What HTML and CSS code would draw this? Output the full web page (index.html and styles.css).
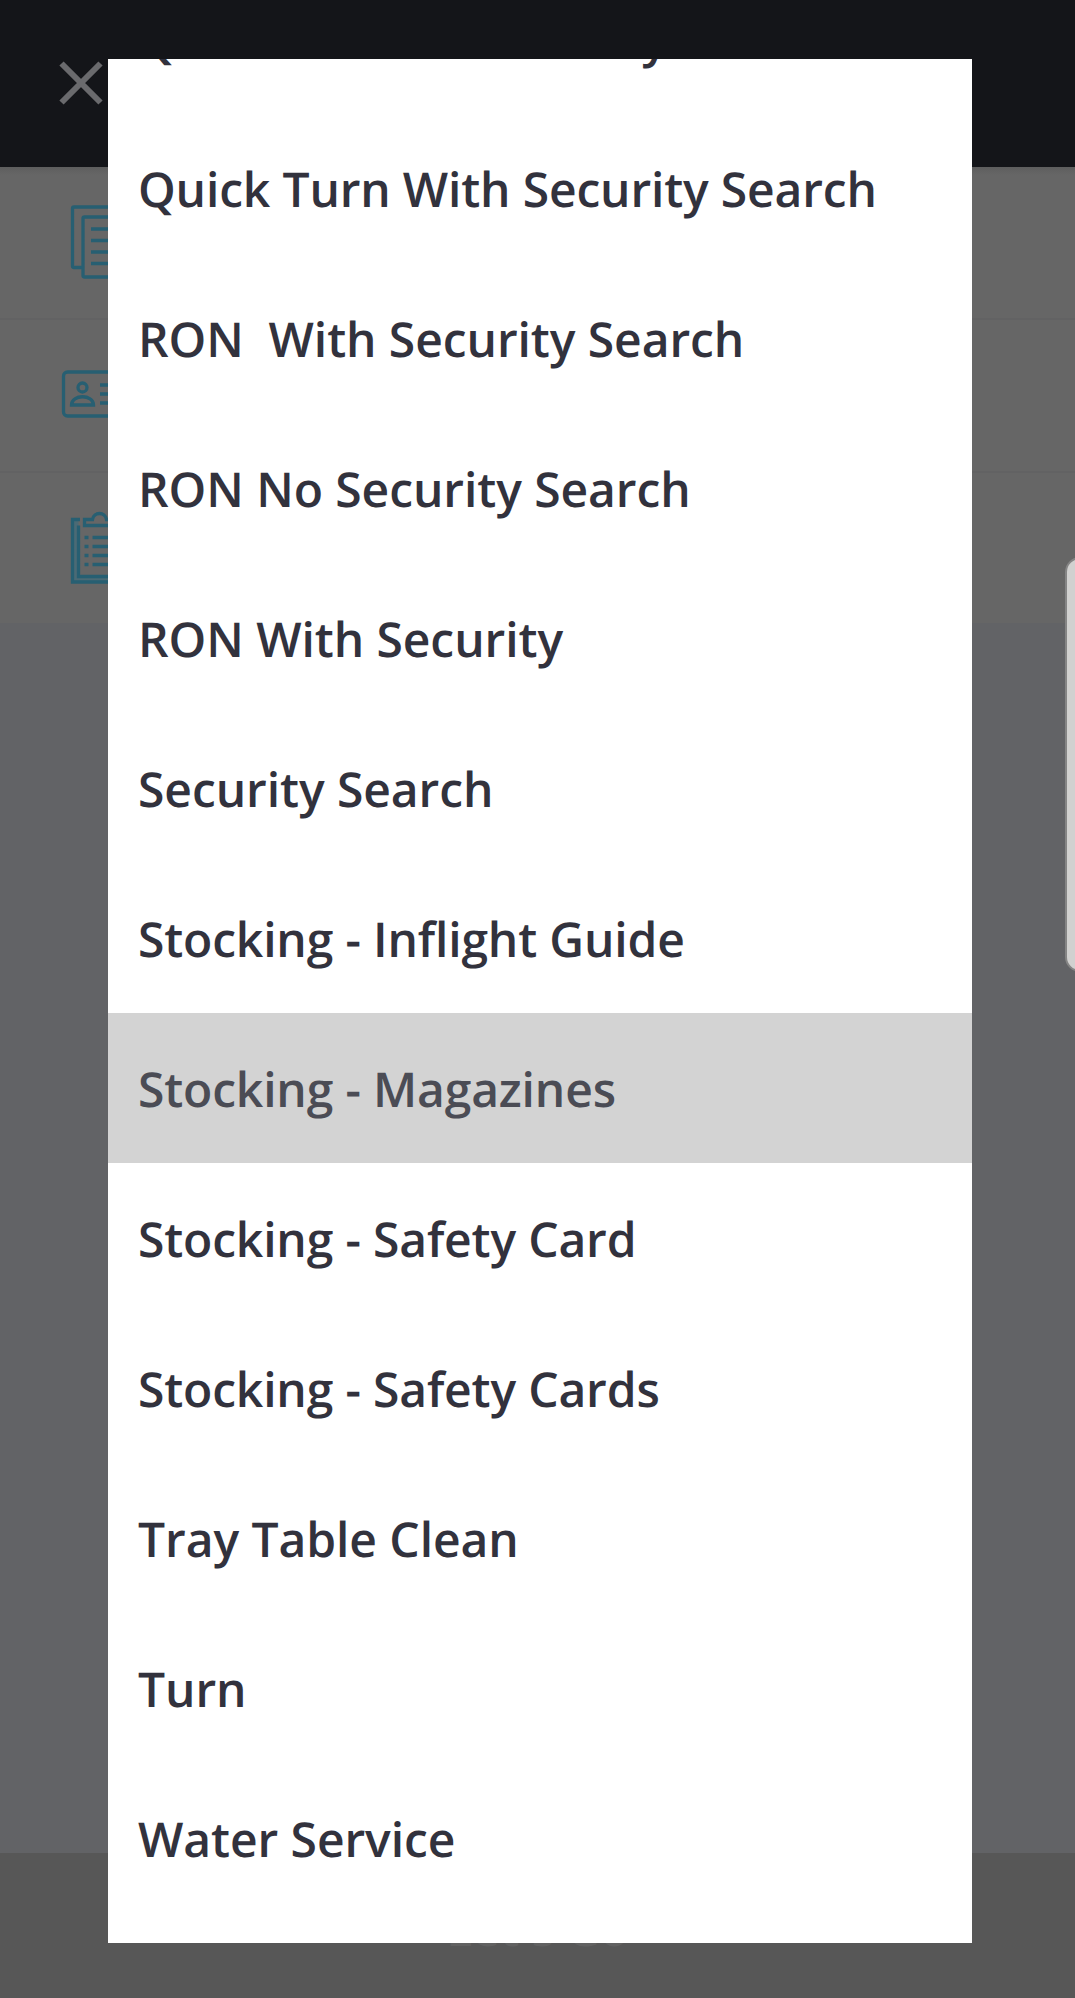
FILE: index.html
```html
<!DOCTYPE html>
<html lang="en">
<head>
<meta charset="utf-8">
<title>Select service</title>
<link rel="stylesheet" href="styles.css">
</head>
<body>
<div class="screen">
  <header class="header">
    <svg class="close" viewBox="0 0 44 44"><path d="M2.500 2.500 41.500 41.500M41.500 2.500 2.500 41.500"/></svg>
  </header>
  <main class="rows">
    <div class="row">
      <svg class="icon" viewBox="0 0 96 96"><path d="M22 72.500H14a1.500 1.500 0 0 1-1.500-1.500V13.500a1.500 1.500 0 0 1 1.500-1.500h50v9M24.500 22h50v60H24.500a1.500 1.500 0 0 1-1.500-1.500V23.500a1.500 1.500 0 0 1 1.500-1.500zM31 34h34M31 45.500h34M31 57h34M31 68.500h34"/></svg>
    </div>
    <div class="row">
      <svg class="icon" viewBox="0 0 96 96"><rect x="3.500" y="24" width="76" height="44" rx="4"/><circle cx="22.500" cy="39.500" r="4.500"/><path d="M11.500 57c0-11 22-11 22 0zM40 37h32M40 46h30M40 55h30"/></svg>
    </div>
    <div class="row">
      <svg class="icon" viewBox="0 0 96 96"><path class="icon-frame" d="M15.500 21v58h54V21"/><path d="M20 19.500H12.500V82h60V19.500h-7M18.500 25.500v51h48V25.500M24.500 25.500v-6h8c1-8 13-8 14 0h9v6zM24.500 37.500h4M32.500 37.500h30M24.500 46.500h4M32.500 46.500h30M24.500 55.500h4M32.500 55.500h30M24.500 64.500h4M32.500 64.500h30"/></svg>
    </div>
  </main>
  <footer class="footer">Let's Go</footer>
</div>
<div class="edge-handle"></div>
<div class="dialog">
  <ul class="options">
    <li class="option option-tight">Quick Turn No Security Search</li>
    <li class="option option-tight">Quick Turn With Security Search</li>
    <li class="option">RON  With Security Search</li>
    <li class="option">RON No Security Search</li>
    <li class="option">RON With Security</li>
    <li class="option">Security Search</li>
    <li class="option option-tight">Stocking - Inflight Guide</li>
    <li class="option option-tight option-pressed">Stocking - Magazines</li>
    <li class="option option-tight">Stocking - Safety Card</li>
    <li class="option option-tight">Stocking - Safety Cards</li>
    <li class="option">Tray Table Clean</li>
    <li class="option">Turn</li>
    <li class="option">Water Service</li>
  </ul>
</div>
</body>
</html>
```
FILE: styles.css
```css
* {
  box-sizing: border-box;
}

body {
  margin: 0;
  font-family: "Open Sans", sans-serif;
  text-rendering: geometricPrecision;
  background: #626366;
  overflow: hidden;
}

.screen {
  display: flex;
  flex-direction: column;
  height: 1998px;
}

.header {
  height: 167px;
  padding: 61px 59px;
  background: #141519;
}

.close {
  display: block;
  width: 44px;
  height: 44px;
  fill: none;
  stroke: #6a6a6d;
  stroke-width: 6;
}

.rows {
  flex: 1;
  background: linear-gradient(#5e5e5e, #666 8px) no-repeat 0 0 / 100% 456px;
}

.row {
  display: flex;
  align-items: center;
  height: 153px;
  padding-left: 60px;
  border-bottom: 2px solid #626263;
}

.row:last-child {
  height: 150px;
  border-bottom: 0;
}

.icon {
  width: 96px;
  height: 96px;
  fill: none;
  stroke: #275f72;
  stroke-width: 3.3;
}

.icon-frame {
  stroke: #4b6a75;
  stroke-width: 6;
}

.footer {
  height: 145px;
  background: #575757;
  color: #616161;
  font-size: 46px;
  font-weight: 700;
  line-height: 152px;
  text-align: center;
}

.edge-handle {
  position: absolute;
  top: 557px;
  right: -20px;
  width: 30px;
  height: 415px;
  border: 2px solid #858585;
  border-radius: 18px;
  background: #d1d1d0;
}

.dialog {
  position: absolute;
  top: 59px;
  left: 108px;
  display: flex;
  flex-direction: column;
  justify-content: flex-end;
  width: 864px;
  height: 1884px;
  padding-bottom: 30px;
  overflow: hidden;
  background: #fff;
}

.options {
  margin: 0;
  padding: 0;
  list-style: none;
}

.option {
  height: 150px;
  padding-left: 30px;
  color: #32323d;
  font-size: 48px;
  font-weight: 600;
  letter-spacing: -0.08px;
  line-height: 154px;
  white-space: pre;
}

.option-tight {
  letter-spacing: -0.17px;
}

.option-pressed {
  background: #d3d3d3;
  color: #4b4c55;
}
```
